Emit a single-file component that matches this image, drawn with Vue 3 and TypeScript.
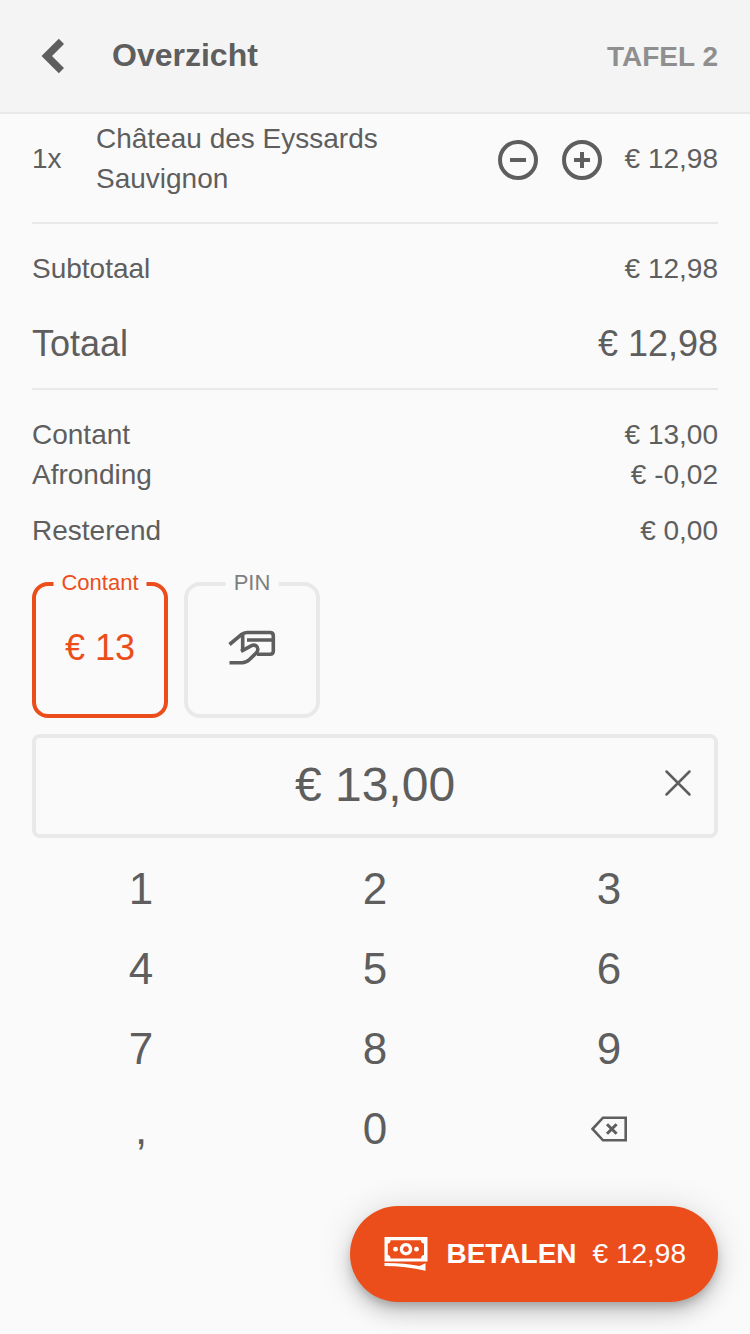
<script setup lang="ts">
import { computed, ref } from 'vue'

const keys = ['1', '2', '3', '4', '5', '6', '7', '8', '9', ',', '0']
const unitPrice = 12.98
const quantity = ref(1)
const entered = ref('13,00')

const money = (value: number) => '€ ' + value.toFixed(2).replace('.', ',')
const total = computed(() => quantity.value * unitPrice)
const amount = computed(() => '€ ' + entered.value)

function press(key: string) {
  entered.value += key
}
function erase() {
  entered.value = entered.value.slice(0, -1)
}
</script>

<template>
  <div class="page">
    <header class="bar">
      <button class="back" type="button" aria-label="Terug">
        <svg width="24" height="36" viewBox="0 0 24 36"><path d="M.5 18 17.8.8l5.2 5.2-12 12 12 12-5.2 5.2z" fill="currentColor" /></svg>
      </button>
      <h1 class="title">Overzicht</h1>
      <span class="table-name">TAFEL 2</span>
    </header>

    <main class="content">
      <section class="item">
        <span class="count">{{ quantity }}x</span>
        <span class="name">Château des Eyssards Sauvignon</span>
        <div class="steppers">
          <button type="button" aria-label="Minder" @click="quantity = Math.max(1, quantity - 1)">
            <svg width="40" height="40" viewBox="0 0 40 40" fill="none" stroke="currentColor" stroke-width="4"><circle cx="20" cy="20" r="18" /><path d="M12 20h16" /></svg>
          </button>
          <button type="button" aria-label="Meer" @click="quantity++">
            <svg width="40" height="40" viewBox="0 0 40 40" fill="none" stroke="currentColor" stroke-width="4"><circle cx="20" cy="20" r="18" /><path d="M12 20h16M20 12v16" /></svg>
          </button>
        </div>
        <span class="price">{{ money(total) }}</span>
      </section>

      <section class="sums">
        <div class="line"><span>Subtotaal</span><span>{{ money(total) }}</span></div>
        <div class="line total"><span>Totaal</span><span>{{ money(total) }}</span></div>
      </section>

      <section class="payments">
        <div class="line"><span>Contant</span><span>€ 13,00</span></div>
        <div class="line"><span>Afronding</span><span>€ -0,02</span></div>
        <div class="line rest"><span>Resterend</span><span>€ 0,00</span></div>
      </section>

      <div class="methods">
        <button class="method active" type="button">
          <span class="legend">Contant</span>
          <span class="value">€ 13</span>
        </button>
        <button class="method" type="button">
          <span class="legend">PIN</span>
          <svg width="48" height="36" viewBox="0 0 48 36" fill="none" stroke="currentColor" stroke-width="3.6">
            <path d="M1.5 14.5 13 4.8Q16 2.5 19 2.5H42Q45.3 2.5 45.3 5.8V21Q45.3 24.3 42 24.3H29M19 10H45M14.7 4V20" />
            <path d="M13 21.3 23.5 15.6C27 14 30 16.5 29.8 19.5Q29.7 21.5 28.2 23L21.5 29.5Q18 32.8 14 32.8H1.5" />
          </svg>
        </button>
      </div>

      <div class="amount">
        <input type="text" aria-label="Bedrag" :value="amount" readonly />
        <button class="clear" type="button" aria-label="Wissen" @click="entered = ''">
          <svg width="28" height="28" viewBox="0 0 28 28" fill="none" stroke="currentColor" stroke-width="2.5" stroke-linecap="round"><path d="M2.5 2.5 25.5 25.5M25.5 2.5 2.5 25.5" /></svg>
        </button>
      </div>

      <div class="keypad">
        <button v-for="key in keys" :key="key" type="button" @click="press(key)">{{ key }}</button>
        <button type="button" aria-label="Backspace" @click="erase">
          <svg width="36" height="26" viewBox="0 0 36 26" fill="none" stroke="currentColor"><path d="M1.5 13 12 1.7H34.7V24.3H12z" stroke-width="2.6" /><path d="M16 8.2 25.6 17.8M25.6 8.2 16 17.8" stroke-width="3" /></svg>
        </button>
      </div>
    </main>

    <footer class="footer">
      <button class="pay" type="button">
        <svg width="46" height="34" viewBox="0 0 46 34" fill="currentColor">
          <path fill-rule="evenodd" d="M.5 0H43.5V24.5H.5zM6.5 3.2Q6.5 6.5 3.8 6.5V18Q6.5 18 6.5 21.5H37Q37 18 40 18V6.5Q37 6.5 37 3.2z" />
          <path fill-rule="evenodd" d="M22 6a6.2 6.2 0 1 0 .01 0zM22 9.3a2.9 2.9 0 1 1-.01 0z" />
          <circle cx="11.5" cy="12.2" r="2.4" /><circle cx="32.5" cy="12.2" r="2.4" />
          <path d="M.5 26H3Q20 26 35.5 29L41.5 26.2V33.7Q22 29 .5 29z" />
        </svg>
        <strong>BETALEN</strong>
        <span>{{ money(total) }}</span>
      </button>
    </footer>
  </div>
</template>

<style>
body {
  margin: 0;
  background: #fafafa;
}
</style>

<style scoped>
.page {
  box-sizing: border-box;
  display: flex;
  flex-direction: column;
  min-height: 100vh;
  color: #5e5e5e;
  font-family: "Liberation Sans", Arial, sans-serif;
  font-size: 28px;
  line-height: 40px;
}
button {
  display: flex;
  align-items: center;
  justify-content: center;
  padding: 0;
  border: 0;
  background: none;
  color: inherit;
  font: inherit;
  cursor: pointer;
}
.bar {
  display: flex;
  align-items: center;
  height: 112px;
  padding-right: 32px;
  border-bottom: 2px solid #e9e9e9;
  background: #f4f4f4;
}
.back {
  width: 112px;
  height: 112px;
  padding-right: 6px;
}
.title {
  flex: 1;
  margin: 0;
  padding-bottom: 2px;
  font-size: 32px;
  font-weight: bold;
}
.table-name {
  padding-top: 2px;
  color: #8f8f8f;
  font-weight: bold;
}
.content {
  padding: 0 32px;
}
.item {
  display: flex;
  align-items: center;
  padding: 5px 0 23px;
  border-bottom: 2px solid #e9e9e9;
}
.count {
  width: 64px;
}
.name {
  flex: 1;
  padding-right: 64px;
}
.steppers {
  display: flex;
  gap: 24px;
  padding-top: 2px;
  margin-right: 23px;
}
.line {
  display: flex;
  justify-content: space-between;
}
.sums {
  padding: 25px 0 16px;
  border-bottom: 2px solid #e9e9e9;
}
.total {
  margin-top: 27px;
  font-size: 36px;
  line-height: 56px;
}
.payments {
  padding: 25px 0 31px;
}
.rest {
  margin-top: 16px;
}
.methods {
  display: flex;
  gap: 16px;
}
.method {
  position: relative;
  box-sizing: border-box;
  width: 136px;
  height: 136px;
  padding-bottom: 4px;
  border: 4px solid #e9e9e9;
  border-radius: 16px;
}
.method.active {
  border-color: #eb4e1b;
  color: #eb4e1b;
}
.legend {
  position: absolute;
  top: -15px;
  left: 50%;
  padding: 0 8px;
  background: #fafafa;
  color: #7e7e7e;
  font-size: 22px;
  line-height: 24px;
  transform: translateX(-50%);
}
.active .legend {
  color: #eb4e1b;
}
.value {
  font-size: 36px;
}
.amount {
  position: relative;
  margin-top: 16px;
}
.amount input {
  display: block;
  box-sizing: border-box;
  width: 100%;
  height: 104px;
  padding: 0 72px 4px;
  border: 4px solid #e9e9e9;
  border-radius: 8px;
  outline: 0;
  background: none;
  color: inherit;
  font: inherit;
  font-size: 48px;
  text-align: center;
}
.clear {
  position: absolute;
  top: 9px;
  right: 0;
  width: 80px;
  height: 80px;
}
.keypad {
  display: grid;
  grid-template-columns: repeat(3, 1fr);
  grid-auto-rows: 80px;
  margin: 11px -8px 0;
  font-size: 44px;
}
.footer {
  display: flex;
  justify-content: flex-end;
  margin-top: auto;
  padding: 32px;
}
.pay {
  gap: 16px;
  height: 96px;
  padding: 0 32px 0 34px;
  border-radius: 48px;
  background: #eb4e1b;
  box-shadow: 0 6px 10px -2px rgba(0, 0, 0, 0.2), 0 12px 20px rgba(0, 0, 0, 0.14), 0 2px 36px rgba(0, 0, 0, 0.12);
  color: #fff;
}
</style>
